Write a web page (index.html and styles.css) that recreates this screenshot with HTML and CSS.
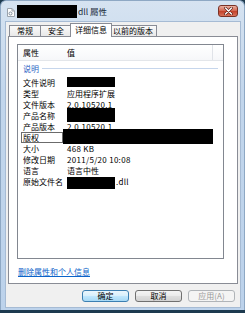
FILE: index.html
```html
<!DOCTYPE html>
<html lang="zh-CN">
<head>
  <meta charset="UTF-8">
  <meta name="viewport" content="width=device-width, initial-scale=1.0">
  <title>dll 屬性</title>
  <link rel="stylesheet" href="styles.css">
</head>
<body>
  <div class="window">
    <div class="titlebar">
      <svg class="app-icon" width="8" height="9" viewBox="0 0 8 9">
        <path d="M0.5 0.5h4.5l2.5 2.5v5.5h-7z" fill="#fdfdfd" stroke="#9aa3ad"/>
        <path d="M5 0.5v2.5h2.5" fill="none" stroke="#9aa3ad"/>
        <circle cx="3.5" cy="5.5" r="1.5" fill="none" stroke="#7d8c9c"/>
      </svg>
      <span class="redact title-redact"></span>
      <span class="title-text">dll 屬性</span>
      <span class="close-btn">
        <svg width="9" height="8" viewBox="0 0 9 8">
          <path d="M1.5 1l6 6M7.5 1l-6 6" stroke="#5a1e14" stroke-width="2.6" stroke-linecap="round"/>
          <path d="M1.5 1l6 6M7.5 1l-6 6" stroke="#fff" stroke-width="1.4" stroke-linecap="round"/>
        </svg>
      </span>
    </div>

    <div class="client">
      <div class="tabs">
        <span class="tab">常规</span>
        <span class="tab">安全</span>
        <span class="tab active">详细信息</span>
        <span class="tab">以前的版本</span>
      </div>

      <div class="panel">
        <div class="listbox">
          <div class="list-head">
            <span class="col-name">属性</span>
            <span class="col-value">值</span>
          </div>

          <div class="group"><span>说明</span><i class="group-line"></i></div>

          <div class="row">
            <span class="name">文件说明</span>
            <span class="value"><span class="redact redact-desc"></span></span>
          </div>
          <div class="row">
            <span class="name">类型</span>
            <span class="value">应用程序扩展</span>
          </div>
          <div class="row">
            <span class="name">文件版本</span>
            <span class="value num">2.0.10520.1</span>
          </div>
          <div class="row">
            <span class="name">产品名称</span>
            <span class="value"><span class="redact redact-product"></span></span>
          </div>
          <div class="row">
            <span class="name">产品版本</span>
            <span class="value num">2.0.10520.1</span>
          </div>
          <div class="row selected">
            <span class="name">版权</span>
            <span class="value bare"><span class="redact redact-copyright"></span></span>
          </div>
          <div class="row">
            <span class="name">大小</span>
            <span class="value num">468 KB</span>
          </div>
          <div class="row">
            <span class="name">修改日期</span>
            <span class="value num">2011/5/20 10:08</span>
          </div>
          <div class="row">
            <span class="name">语言</span>
            <span class="value">语言中性</span>
          </div>
          <div class="row">
            <span class="name">原始文件名</span>
            <span class="value"><span class="redact redact-orig"></span><span class="num">.dll</span></span>
          </div>
        </div>

        <a class="remove-link" href="#">删除属性和个人信息</a>
      </div>

      <div class="buttons">
        <span class="btn default">确定</span>
        <span class="btn">取消</span>
        <span class="btn disabled">应用(A)</span>
      </div>
    </div>
  </div>
</body>
</html>
```

FILE: styles.css
```css
* {
  box-sizing: border-box;
}

body {
  margin: 0;
  width: 245px;
  height: 313px;
  overflow: hidden;
  background: #1d3a4f;
  font-family: "Noto Sans CJK SC", "Liberation Sans", sans-serif;
  font-size: 8px;
  color: #000;
}

.window {
  height: 310px;
  padding: 0 3px 2px 4px;
  background: linear-gradient(to bottom, #d6e3f1, #c2d6ec 30%, #bcd2eb);
  border: 1px solid #8ea8c4;
  border-bottom: none;
  border-radius: 6px 6px 0 0;
}

.titlebar {
  display: flex;
  align-items: center;
  height: 20px;
}

.app-icon {
  margin-left: 2px;
  margin-top: 3px;
}

.redact {
  display: block;
  background: #000;
}

.title-redact {
  width: 60px;
  height: 13px;
  margin-left: 2px;
  margin-top: 1px;
}

.title-text {
  margin-left: 1px;
  font-size: 8.5px;
  color: #1b2b3b;
}

.close-btn {
  display: flex;
  align-items: center;
  justify-content: center;
  align-self: flex-start;
  margin: 4px 3px 0 auto;
  width: 20px;
  height: 12px;
  border: 1px solid #7a3226;
  border-radius: 3px;
  background: linear-gradient(to bottom, #eab0a2, #d46a55 45%, #c4442d 55%, #d8735c);
}

.client {
  height: 287px;
  background: #f0f0f0;
  border: 1px solid #a6bbd4;
}

.tabs {
  display: flex;
  align-items: flex-end;
  height: 14px;
  padding-left: 3px;
  position: relative;
  z-index: 1;
}

.tab {
  min-width: 32px;
  height: 11px;
  padding: 0 3px;
  margin-left: -1px;
  line-height: 10px;
  text-align: center;
  border: 1px solid #898c95;
  border-bottom: none;
  background: linear-gradient(to bottom, #fafafa, #e9e9e9);
  white-space: nowrap;
}

.tab:first-child {
  margin-left: 0;
}

.tab.active {
  position: relative;
  z-index: 2;
  height: 14px;
  margin: 0 -2px -1px -2px;
  padding: 0 4px;
  line-height: 12px;
  background: #fff;
}

.panel {
  margin-left: 2px;
  width: 230px;
  height: 248px;
  padding: 7px 0 0 8px;
  background: #fff;
  border: 1px solid #898c95;
}

.listbox {
  width: 207px;
  height: 215px;
  border: 1px solid #828790;
}

.list-head {
  display: flex;
  height: 16px;
  line-height: 15px;
  background: linear-gradient(to bottom, #fff, #f6f7f9);
  border-bottom: 1px solid #e3e6ea;
}

.col-name {
  width: 46px;
  padding-left: 5px;
}

.col-value {
  width: 149px;
  padding-left: 3px;
  border-right: 1px solid #e0e3e8;
}

.group {
  display: flex;
  align-items: center;
  height: 11px;
  line-height: 11px;
  margin: 2px 0 3px;
  padding-left: 5px;
  color: #2c63c4;
}

.group-line {
  flex: 1;
  height: 1px;
  margin: 0 5px 0 3px;
  background: #c6d6ec;
}

.row {
  display: grid;
  grid-template-columns: 42px 1fr;
  grid-template-rows: 11px;
  height: 11px;
  line-height: 11px;
  padding-left: 3px;
  white-space: nowrap;
}

.name {
  padding-left: 2px;
}

.value {
  display: flex;
  align-items: flex-start;
  padding-left: 4px;
}

.value.bare {
  padding-left: 0;
}

.num {
  letter-spacing: 0.3px;
}

.row.selected .name {
  outline: 1px solid #6b6b6b;
  outline-offset: -1px;
}

.redact-desc {
  width: 48px;
  height: 10px;
}

.redact-product {
  width: 48px;
  height: 14px;
  margin-top: -2px;
}

.redact-copyright {
  width: 150px;
  height: 15px;
  margin-top: -3px;
}

.redact-orig {
  width: 48px;
  height: 12px;
  margin-top: 1px;
  margin-right: 1px;
}

.remove-link {
  display: inline-block;
  margin: 7px 0 0 1px;
  line-height: 11px;
  color: #0b63c9;
  text-decoration: underline;
}

.buttons {
  display: flex;
  justify-content: flex-end;
  gap: 6px;
  margin-top: 6px;
  padding-right: 5px;
}

.btn {
  width: 47px;
  height: 12px;
  line-height: 10px;
  text-align: center;
  border: 1px solid #707070;
  border-radius: 3px;
  background: linear-gradient(to bottom, #f4f4f4, #ebebeb 45%, #dddddd 55%, #d2d2d2);
}

.btn.default {
  border-color: #3c7fb1;
  background: linear-gradient(to bottom, #eaf6fd, #d9f0fc 45%, #bee6fd 55%, #a7d9f5);
}

.btn.disabled {
  color: #9a9a9a;
  border-color: #b0b4b8;
  background: #f4f4f4;
}
```
